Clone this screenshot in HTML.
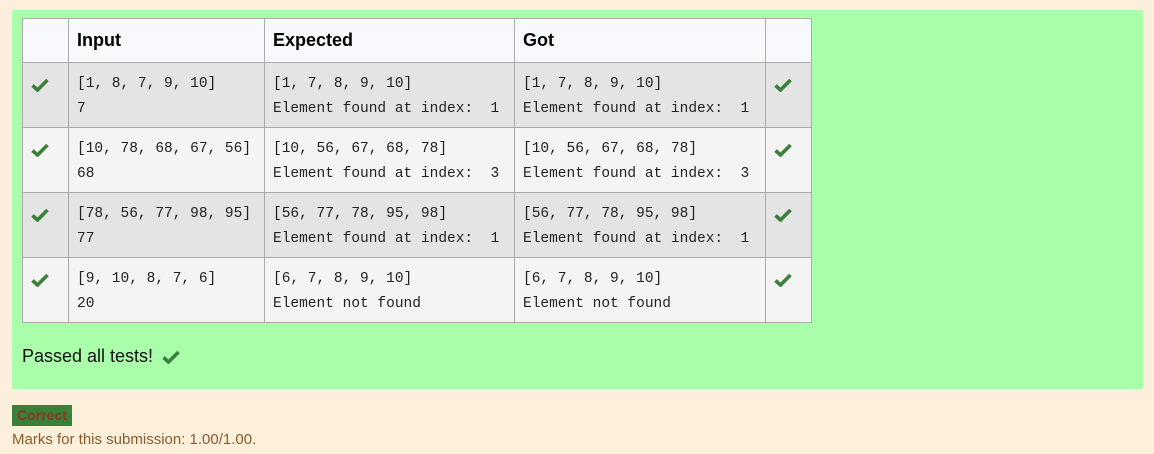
<!DOCTYPE html>
<html><head><style>
body{margin:0;background:#fcefdc;width:1154px;height:454px;overflow:hidden;font-family:"Liberation Sans",sans-serif;}
.box{position:absolute;left:12px;top:10px;width:1131px;height:379px;background:#aaffaa;}
table{position:absolute;left:22px;top:18px;border-collapse:collapse;}
td,th{border:1px solid #aaa;padding:0 8px;vertical-align:top;text-align:left;}
th{background:#f8f9fc;height:43px;vertical-align:middle;font-size:18px;font-weight:bold;color:#000;}
td{height:65px;font-family:"Liberation Mono",monospace;font-size:14.5px;line-height:25px;color:#222;padding-top:9px;box-sizing:border-box;}
tr.a td{background:#e4e4e4}
tr.b td{background:#f4f4f4}
td.ck{padding-top:15px;}
.ck svg{display:block}
.pass{position:absolute;left:22px;top:346px;font-size:18px;color:#111;}
.pass svg{position:absolute;left:140px;top:4px}
.badge{position:absolute;left:12px;top:405px;width:60px;height:21px;background:#3a7f3a;color:#8a3a1a;font-weight:bold;font-size:14px;text-align:center;line-height:21px;}
.marks{position:absolute;left:12px;top:431px;font-size:15px;color:#8a5a2a;}
</style></head><body>
<div class="box"></div>
<table>
<tr><th style="width:29px"></th><th style="width:179px">Input</th><th style="width:233px">Expected</th><th style="width:234px">Got</th><th style="width:29px"></th></tr>
<tr class="a"><td class="ck"><svg width="18" height="14" viewBox="0 0 18 14"><path d="M1.5 7.5 L6.5 12 L16.5 2" fill="none" stroke="#3a7f3a" stroke-width="3.6"/></svg></td><td>[1, 8, 7, 9, 10]<br>7</td><td>[1, 7, 8, 9, 10]<br>Element found at index:&nbsp; 1</td><td>[1, 7, 8, 9, 10]<br>Element found at index:&nbsp; 1</td><td class="ck"><svg width="18" height="14" viewBox="0 0 18 14"><path d="M1.5 7.5 L6.5 12 L16.5 2" fill="none" stroke="#3a7f3a" stroke-width="3.6"/></svg></td></tr>
<tr class="b"><td class="ck"><svg width="18" height="14" viewBox="0 0 18 14"><path d="M1.5 7.5 L6.5 12 L16.5 2" fill="none" stroke="#3a7f3a" stroke-width="3.6"/></svg></td><td>[10, 78, 68, 67, 56]<br>68</td><td>[10, 56, 67, 68, 78]<br>Element found at index:&nbsp; 3</td><td>[10, 56, 67, 68, 78]<br>Element found at index:&nbsp; 3</td><td class="ck"><svg width="18" height="14" viewBox="0 0 18 14"><path d="M1.5 7.5 L6.5 12 L16.5 2" fill="none" stroke="#3a7f3a" stroke-width="3.6"/></svg></td></tr>
<tr class="a"><td class="ck"><svg width="18" height="14" viewBox="0 0 18 14"><path d="M1.5 7.5 L6.5 12 L16.5 2" fill="none" stroke="#3a7f3a" stroke-width="3.6"/></svg></td><td>[78, 56, 77, 98, 95]<br>77</td><td>[56, 77, 78, 95, 98]<br>Element found at index:&nbsp; 1</td><td>[56, 77, 78, 95, 98]<br>Element found at index:&nbsp; 1</td><td class="ck"><svg width="18" height="14" viewBox="0 0 18 14"><path d="M1.5 7.5 L6.5 12 L16.5 2" fill="none" stroke="#3a7f3a" stroke-width="3.6"/></svg></td></tr>
<tr class="b"><td class="ck"><svg width="18" height="14" viewBox="0 0 18 14"><path d="M1.5 7.5 L6.5 12 L16.5 2" fill="none" stroke="#3a7f3a" stroke-width="3.6"/></svg></td><td>[9, 10, 8, 7, 6]<br>20</td><td>[6, 7, 8, 9, 10]<br>Element not found</td><td>[6, 7, 8, 9, 10]<br>Element not found</td><td class="ck"><svg width="18" height="14" viewBox="0 0 18 14"><path d="M1.5 7.5 L6.5 12 L16.5 2" fill="none" stroke="#3a7f3a" stroke-width="3.6"/></svg></td></tr>
</table>
<div class="pass">Passed all tests!<svg width="18" height="14" viewBox="0 0 18 14"><path d="M1.5 7.5 L6.5 12 L16.5 2" fill="none" stroke="#3a7f3a" stroke-width="3.6"/></svg></div>
<div class="badge">Correct</div>
<div class="marks">Marks for this submission: 1.00/1.00.</div>
</body></html>
